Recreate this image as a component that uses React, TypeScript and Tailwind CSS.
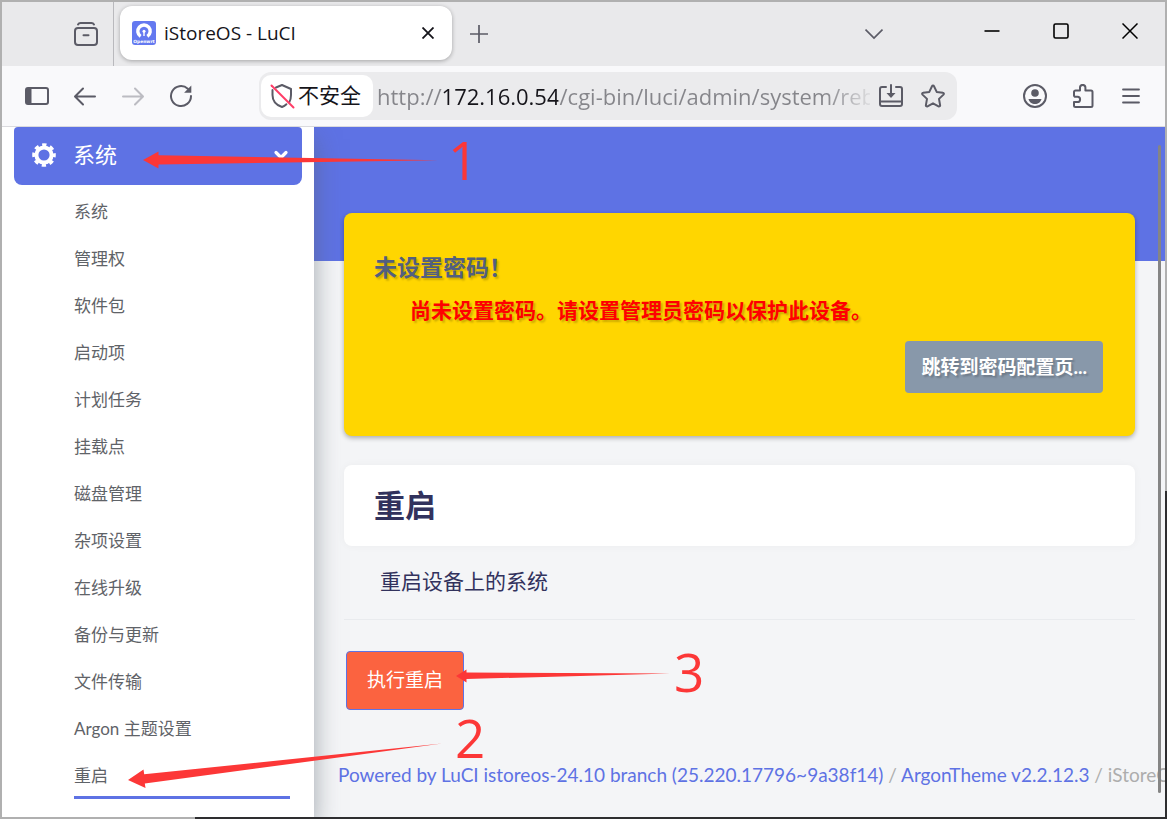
import React from 'react';

const MENU_ITEMS = [
    '系统',
    '管理权',
    '软件包',
    '启动项',
    '计划任务',
    '挂载点',
    '磁盘管理',
    '杂项设置',
    '在线升级',
    '备份与更新',
    '文件传输',
    'Argon 主题设置',
    '重启'
];

const Icon = ({ size = 24, children }: { size?: number; children: React.ReactNode }) => (
    <svg width={size} height={size} viewBox="0 0 24 24" fill="none" stroke="currentColor" strokeWidth="2" strokeLinecap="round" strokeLinejoin="round" aria-hidden="true">
        {children}
    </svg>
);

const ToolbarButton = ({ label, children, dim = false }: { label: string; children: React.ReactNode; dim?: boolean }) => (
    <button
        type="button"
        aria-label={label}
        className={`flex h-12 w-12 shrink-0 items-center justify-center ${dim ? 'text-[#bcbcc2]' : 'text-[#5b5b66]'}`}
    >
        {children}
    </button>
);

const Favicon = () => (
    <svg width="24" height="24" viewBox="0 0 24 24" className="shrink-0" aria-hidden="true">
        <rect width="24" height="24" rx="3" fill="#6479f0" />
        <path d="M8.600 15.400A6.200 6.200 0 1 1 15.400 15.400" fill="none" stroke="#fff" strokeWidth="3.400" />
        <circle cx="12" cy="10.200" r="1.500" fill="#fff" />
        <path d="M12 10.500v4.500" stroke="#fff" strokeWidth="1.400" />
        <text x="12" y="22.300" textAnchor="middle" fontSize="4.400" fontWeight="700" fontFamily="DejaVu Sans" fill="#fff">Openwrt</text>
    </svg>
);

const TabStrip = () => (
    <div className="flex h-16 shrink-0 bg-[#e9e9eb]">
        <div className="flex w-28 shrink-0 items-center justify-end border-r border-[#b9b9bd] pr-[3px]">
            <ToolbarButton label="Recent tabs">
                <Icon>
                    <path d="M4 2.400C4.600 1.400 5.400 1 6.500 1h11c1.100 0 1.900.4 2.500 1.400" />
                    <rect x="1" y="6" width="22" height="17" rx="3" />
                    <path d="M9.500 13.200h5" />
                </Icon>
            </ToolbarButton>
        </div>
        <div className="mt-1 ml-1.5 flex h-[54px] w-[332px] items-center gap-2 rounded-xl bg-white pr-1 pl-3 shadow-[0_1px_4px_rgba(0,0,0,0.3)]">
            <Favicon />
            <span className="flex-1 truncate text-[19px] text-[#15141a]">iStoreOS - LuCI</span>
            <button type="button" aria-label="Close tab" className="flex h-10 w-10 items-center justify-center text-[#15141a]">
                <svg width="12" height="12" viewBox="0 0 12 12" stroke="currentColor" strokeWidth="1.8" aria-hidden="true">
                    <path d="M.5.5l11 11M11.500.5l-11 11" />
                </svg>
            </button>
        </div>
        <div className="flex flex-1 items-center justify-between pr-[59px] pl-[3px]">
            <ToolbarButton label="New tab">
                <svg width="18" height="18" viewBox="0 0 18 18" stroke="currentColor" strokeWidth="1.7" aria-hidden="true">
                    <path d="M9 0v18M0 9h18" />
                </svg>
            </ToolbarButton>
            <ToolbarButton label="List all tabs">
                <svg width="18" height="18" viewBox="0 0 18 18" fill="none" stroke="currentColor" strokeWidth="1.7" aria-hidden="true">
                    <path d="M.5 4.500L9 13l8.500-8.500" />
                </svg>
            </ToolbarButton>
        </div>
        <div className="flex h-[58px] pr-px text-black">
            <button type="button" aria-label="Minimize" className="flex w-[69px] items-center justify-center">
                <svg width="16" height="16" viewBox="0 0 16 16" fill="none" stroke="currentColor" strokeWidth="1.6" aria-hidden="true">
                    <path d="M.5 8h15" />
                </svg>
            </button>
            <button type="button" aria-label="Maximize" className="flex w-[69px] items-center justify-center">
                <svg width="16" height="16" viewBox="0 0 16 16" fill="none" stroke="currentColor" strokeWidth="1.6" aria-hidden="true">
                    <rect x="1" y="1" width="14" height="14" rx="1.500" />
                </svg>
            </button>
            <button type="button" aria-label="Close" className="flex w-[69px] items-center justify-center">
                <svg width="16" height="16" viewBox="0 0 16 16" fill="none" stroke="currentColor" strokeWidth="1.5" aria-hidden="true">
                    <path d="M.5.5l15 15M15.500.5l-15 15" />
                </svg>
            </button>
        </div>
    </div>
);

const Toolbar = () => (
    <div className="flex h-[61px] shrink-0 items-center border-b border-[#dadade] bg-[#f9f9fb] pr-2.5 pl-[11px]">
        <ToolbarButton label="Sidebar">
            <Icon>
                <rect x="1" y="4" width="22" height="16" rx="2" />
                <path d="M1.500 5h5v14h-5z" fill="currentColor" stroke="none" />
            </Icon>
        </ToolbarButton>
        <ToolbarButton label="Back">
            <Icon>
                <path d="M22 12.500H2.500M10 4.500l-8 8 8 8" />
            </Icon>
        </ToolbarButton>
        <ToolbarButton label="Forward" dim>
            <Icon>
                <path d="M2 12.500h19.500M14 4.500l8 8-8 8" />
            </Icon>
        </ToolbarButton>
        <ToolbarButton label="Reload">
            <Icon>
                <path d="M22 12a10 10 0 1 1-3.200-7.300" />
                <path d="M22.300 1.500v7.200h-7.200z" fill="currentColor" stroke="none" />
            </Icon>
        </ToolbarButton>
        <div className="mx-[54px] flex h-12 min-w-0 flex-1 items-center rounded-xl bg-[#ebebed] pr-[3px] pl-0.5">
            <button type="button" className="flex h-[42px] shrink-0 items-center gap-[3px] rounded-[10px] bg-white pr-3 pl-2 text-[21px] text-[#15141a]">
                <svg width="26" height="26" viewBox="0 0 26 26" fill="none" strokeWidth="2" strokeLinecap="round" strokeLinejoin="round" aria-hidden="true">
                    <path d="M7 4.500L13 2l9 4v6c0 3-.6 5.500-1.800 7.500M3.500 7v5c0 6 3.200 9.900 9.500 12 1.800-.7 3.200-1.600 4.400-2.700" stroke="#5b5b66" />
                    <path d="M2.500 2.500l22 22" stroke="#ff3d67" />
                </svg>
                不安全
            </button>
            <input
                type="text"
                aria-label="Address"
                defaultValue="http://172.16.0.54/cgi-bin/luci/admin/system/reboot"
                className="ml-1 h-10 w-0 min-w-0 flex-1 bg-[linear-gradient(90deg,#85858a_0_64px,#15141a_64px_181px,#85858a_181px_448px,transparent_500px)] bg-clip-text text-[22px] text-transparent outline-none"
            />
            <button type="button" aria-label="Install" className="flex h-10 w-[42px] shrink-0 items-center justify-center text-[#5b5b66]">
                <Icon>
                    <path d="M7 3H3a2 2 0 0 0-2 2v15a2 2 0 0 0 2 2h18a2 2 0 0 0 2-2V5a2 2 0 0 0-2-2h-4M1 17.500h22M12 1v10" />
                    <path d="M7.500 9h9L12 14z" fill="currentColor" stroke="none" />
                </Icon>
            </button>
            <button type="button" aria-label="Bookmark" className="flex h-10 w-[42px] shrink-0 items-center justify-center text-[#5b5b66]">
                <Icon>
                    <path d="M12 1.500c.5 0 .8.300 1 .7l2.700 5.700 6.200.8c1 .1 1.300 1.200.6 1.900l-4.500 4.300 1.100 6.200c.2 1-.8 1.600-1.600 1.200L12 19.300l-5.500 3c-.8.400-1.800-.2-1.600-1.200L6 14.900l-4.500-4.300c-.7-.7-.4-1.800.6-1.900l6.200-.8L11 2.200c.2-.4.5-.7 1-.7z" />
                </Icon>
            </button>
        </div>
        <ToolbarButton label="Account">
            <Icon>
                <circle cx="12" cy="12" r="11" />
                <circle cx="12" cy="9" r="3.800" fill="currentColor" stroke="none" />
                <path d="M5.500 15h13c-.6 3-3.500 5-6.500 5s-5.900-2-6.500-5z" fill="currentColor" stroke="none" />
            </Icon>
        </ToolbarButton>
        <ToolbarButton label="Extensions">
            <Icon>
                <path d="M3 11V8a1.500 1.500 0 0 1 1.500-1.500H9V3.600a2.700 2.700 0 0 1 5.400 0v2.900H20A1.500 1.500 0 0 1 21.500 8v13.500A1.500 1.500 0 0 1 20 23H4.500A1.500 1.500 0 0 1 3 21.500V18h3.500a2.600 2.600 0 0 0 0-5.200H4.500A1.500 1.500 0 0 1 3 11z" />
            </Icon>
        </ToolbarButton>
        <ToolbarButton label="Menu">
            <svg width="18" height="18" viewBox="0 0 18 18" stroke="currentColor" strokeWidth="1.8" strokeLinecap="round" aria-hidden="true">
                <path d="M1 2.500h16M1 9h16M1 15.500h16" />
            </svg>
        </ToolbarButton>
    </div>
);

const Sidebar = () => (
    <nav className="z-10 w-[312px] shrink-0 bg-white px-3 shadow-[0_12px_24px_rgba(90,100,110,0.55)]">
        <button type="button" className="flex h-[58px] w-full items-center rounded-t rounded-b-lg bg-[#5e72e4] pr-3 pb-[3px] pl-[18px] text-[22px] text-white">
            <svg width="24" height="24" viewBox="0 0 24 24" fill="none" stroke="currentColor" aria-hidden="true">
                <circle cx="12" cy="12" r="7.600" strokeWidth="4" />
                <circle cx="12" cy="12" r="10" strokeWidth="3.600" strokeDasharray="4.200 3.654" strokeDashoffset="2.100" />
            </svg>
            <span className="ml-[17px] flex-1 text-left">系统</span>
            <svg width="18" height="18" viewBox="0 0 18 18" fill="none" stroke="currentColor" strokeWidth="3.200" strokeLinecap="round" strokeLinejoin="round" aria-hidden="true">
                <path d="M4 6.500l5 5 5-5" />
            </svg>
        </button>
        <ul className="mt-[3px] mr-3 ml-[60px]">
            {MENU_ITEMS.map((item, i) => (
                <li key={item}>
                    <a
                        href="#"
                        className={`flex h-[47px] items-center text-[17px] text-[#5f6368] ${i === MENU_ITEMS.length - 1 ? 'border-b-[3px] border-[#5e72e4] pt-[3px]' : ''}`}
                    >
                        {item}
                    </a>
                </li>
            ))}
        </ul>
    </nav>
);

const Main = () => (
    <main className="min-w-0 flex-1 overflow-hidden bg-[#f4f5f7]">
        <div className="h-[134px] bg-[#5e72e4]"></div>
        <div className="-mt-12 px-[30px]">
            <section className="rounded-lg bg-[#ffd600] px-[30px] pt-[38px] pb-[43px] shadow-[0_2px_5px_rgba(0,0,0,0.3)] [text-shadow:2px_2px_2px_rgba(0,0,0,0.2)]">
                <h4 className="text-[23px] leading-8 font-bold text-[#525f7f]">未设置密码！</h4>
                <p className="mt-[11px] pl-9 text-[21px] leading-8 font-bold text-[#ff0000]">尚未设置密码。请设置管理员密码以保护此设备。</p>
                <div className="mt-[15px] flex justify-end">
                    <button type="button" className="mr-0.5 h-[52px] rounded bg-[#8898aa] px-4 text-[19px] font-bold text-white [text-shadow:inherit]">跳转到密码配置页...</button>
                </div>
            </section>
            <h2 className="mt-[29px] rounded-lg bg-white px-[30px] py-5 text-[31px] leading-[41px] font-bold text-[#32325d] shadow-[0_0_8px_rgba(0,0,0,0.04)]">重启</h2>
            <p className="border-b border-[#e9ebee] px-9 pt-[19px] pb-[22px] text-[21px] leading-8 text-[#32325d]">重启设备上的系统</p>
            <button type="button" className="mt-[31px] ml-0.5 h-[59px] rounded border border-[#5e72e4] bg-[#fb6340] px-5 text-[19px] text-white">执行重启</button>
        </div>
        <footer className="mt-[51px] pl-6 text-[19px] leading-7 whitespace-nowrap text-[#adadad]">
            <a href="#" className="text-[#5e72e4]">Powered by LuCI istoreos-24.10 branch (25.220.17796~9a38f14)</a>
            {' / '}
            <a href="#" className="text-[#5e72e4]">ArgonTheme v2.2.12.3</a>
            {' / iStoreOS'}
        </footer>
    </main>
);

const Annotations = () => (
    <div className="pointer-events-none absolute inset-0 z-20 overflow-hidden text-[53px] leading-none text-[#fc3737] font-['Open_Sans',sans-serif]">
        <svg width="720" height="800" viewBox="0 0 720 800" className="absolute top-0 left-0" fill="currentColor" aria-hidden="true">
            <path d="M143 160l15.500-8.500v3.700L438 160.300 158.500 164.500v4z" />
            <path d="M128 780l15.500-10.500.7 4.700L442 743.500 144.800 783.600l.7 4.400z" />
            <path d="M456 676l10.500-6.500v3L670 673.500 466.500 679v3.500z" />
        </svg>
        <span className="absolute top-[133px] left-[448px]">1</span>
        <span className="absolute top-[711px] left-[455px]">2</span>
        <span className="absolute top-[645px] left-[674px]">3</span>
    </div>
);

export default function App() {
    return (
        <div className="relative flex h-screen flex-col overflow-hidden bg-[#b0b0b0] p-0.5 font-['Open_Sans','Noto_Sans_CJK_SC',sans-serif]">
            {/* desktop showing past the window edge */}
            <div className="absolute right-0 bottom-0 h-2/5 w-0.5 bg-[#2e2e30]"></div>
            <div className="absolute right-0 bottom-0 h-0.5 w-5/6 bg-[#2e2e30]"></div>
            <TabStrip />
            <Toolbar />
            <div className="flex min-h-0 flex-1 overflow-hidden bg-white font-[Lato,'Noto_Sans_CJK_SC',sans-serif]">
                <Sidebar />
                <Main />
            </div>
            <div className="absolute top-[145px] right-1.5 bottom-[26px] z-10 w-[3px] rounded-full bg-[#858585]"></div>
            <Annotations />
        </div>
    );
}
